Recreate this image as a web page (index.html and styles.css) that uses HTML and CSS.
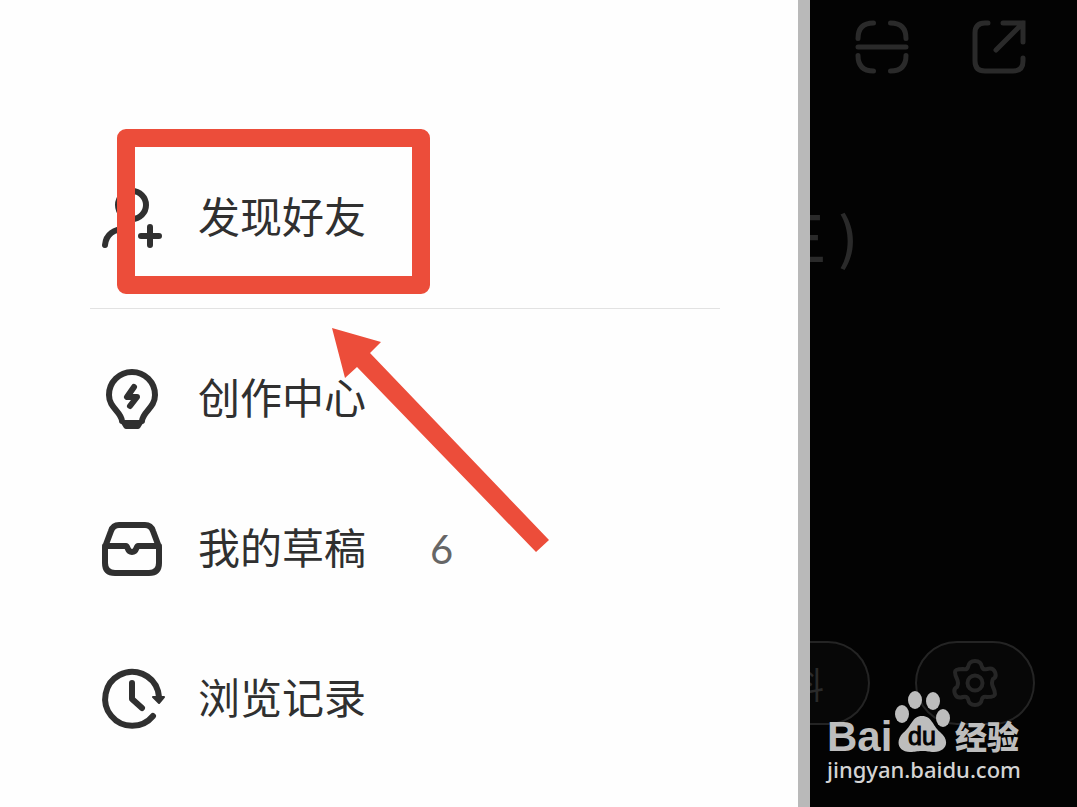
FILE: index.html
```html
<!DOCTYPE html>
<html lang="zh-CN">
<head>
    <meta charset="UTF-8">
    <meta name="viewport" content="width=device-width, initial-scale=1.0">
    <title>发现好友</title>
    <link rel="stylesheet" href="styles.css">
</head>
<body>
    <div class="screen">
        <nav class="drawer">
            <a href="#friends" class="menu-item">
                <svg class="menu-icon" viewBox="0 0 72 72">
                    <circle cx="36" cy="23" r="14"/>
                    <path d="M9 63C10 52 18 47 30 47M54 45v18M45 54h18"/>
                </svg>
                <span class="menu-label">发现好友</span>
            </a>
            <hr class="divider">
            <a href="#creator" class="menu-item">
                <svg class="menu-icon" viewBox="0 0 72 72">
                    <path d="M26 58C25 48 13 45 13 32A23 23 0 0 1 59 32C59 45 47 48 46 58"/>
                    <path class="fill" d="M23 57h26l-5 8q-1 1-2 1H30q-1 0-2-1z"/>
                    <path d="M38 24L31 34H41L34 43" stroke-width="6"/>
                </svg>
                <span class="menu-label">创作中心</span>
            </a>
            <a href="#drafts" class="menu-item">
                <svg class="menu-icon" viewBox="0 0 72 72">
                    <path d="M9 34L15 18Q17 12 23 12H49Q55 12 57 18L63 34V50Q63 60 53 60H19Q9 60 9 50ZM9 33H30C32 33 31 39 36 39S40 33 42 33H63"/>
                </svg>
                <span class="menu-label">我的草稿</span>
                <span class="menu-count">6</span>
            </a>
            <a href="#history" class="menu-item">
                <svg class="menu-icon" viewBox="0 0 72 72">
                    <path d="M57 53A27 27 0 1 1 62 28L63 34M36 20V36L46 45"/>
                    <path class="tip" d="M57 34h11L63 40z"/>
                </svg>
                <span class="menu-label">浏览记录</span>
            </a>
        </nav>

        <div class="backdrop">
            <div class="top-actions">
                <button class="icon-btn" aria-label="扫一扫">
                    <svg viewBox="0 0 54 54">
                        <path d="M3 18.500Q3 3 18.500 3M35.500 3Q51 3 51 18.500M3 35.500Q3 51 18.500 51M35.500 51Q51 51 51 35.500M3 27H51"/>
                    </svg>
                </button>
                <button class="icon-btn" aria-label="分享">
                    <svg viewBox="0 0 54 54">
                        <path d="M16 3H13Q3 3 3 13V41Q3 51 13 51H41Q51 51 51 41V38M31 3H51V22M51 3L24 30" stroke-linejoin="miter"/>
                    </svg>
                </button>
            </div>
            <div class="nickname"><span>王 )</span></div>
            <div class="profile-actions">
                <button class="pill pill-edit"><span>资料</span></button>
                <button class="pill" aria-label="设置">
                    <svg viewBox="0 0 48 48">
                        <path d="M17 8Q18 2 24 2T31 8Q32 11 36 10Q42 8 44 13T42 20Q40 24 42 28T44 35T36 38Q32 37 31 40Q30 46 24 46T17 40Q16 37 12 38Q6 40 4 35T6 28Q8 24 6 20T4 13T12 10Q16 11 17 8Z"/>
                        <circle cx="24" cy="24" r="7.500"/>
                    </svg>
                </button>
            </div>
        </div>

        <!-- highlight and pointer over the first menu entry -->
        <div class="highlight"></div>
        <svg class="arrow" viewBox="0 0 218 226">
            <path d="M0 0L49 14L38 25L217 212L204 224L25 39L13 50Z"/>
        </svg>

        <div class="watermark">
            <div class="brand">
                <span class="brand-bai">Bai</span>
                <svg class="paw" viewBox="0 0 56 62">
                    <ellipse cx="8" cy="23" rx="7" ry="9"/>
                    <ellipse cx="21" cy="9" rx="7" ry="9"/>
                    <ellipse cx="39" cy="10" rx="7" ry="9"/>
                    <ellipse cx="49" cy="27" rx="7" ry="9"/>
                    <path d="M28 25C38 25 38 34 46 41C57 50 52 61 40 61C34 61 34 60 28 60S22 61 16 61C4 61 1 50 9 42C18 35 18 25 28 25Z"/>
                    <text x="28" y="54" text-anchor="middle">du</text>
                </svg>
                <span class="brand-exp">经验</span>
            </div>
            <div class="site">jingyan.baidu.com</div>
        </div>
    </div>
</body>
</html>
```

FILE: styles.css
```css
* {
    margin: 0;
    padding: 0;
    box-sizing: border-box;
}

body {
    font-family: 'Noto Sans CJK SC', sans-serif;
    background: #fefefe;
}

.screen {
    position: relative;
    display: flex;
    min-height: 100vh;
    overflow: hidden;
}

/* Drawer */
.drawer {
    flex: 1;
    padding: 143px 78px 0 90px;
    background: #fefefe;
}

.menu-item {
    display: flex;
    align-items: center;
    height: 150px;
    padding-left: 6px;
    color: #303030;
    text-decoration: none;
}

.menu-icon {
    width: 72px;
    height: 72px;
    margin-right: 30px;
    fill: none;
    stroke: #303030;
    stroke-width: 6;
    stroke-linecap: round;
    stroke-linejoin: round;
}

.menu-icon .fill {
    fill: #303030;
    stroke: none;
}

.menu-icon .tip {
    fill: #303030;
    stroke-width: 2;
}

.menu-label {
    padding-bottom: 6px;
    font-size: 42px;
    line-height: 60px;
}

.menu-count {
    margin-left: 64px;
    font-family: Lato, sans-serif;
    font-size: 40px;
    color: #666;
}

.divider {
    height: 1px;
    margin: 15px 0;
    border: none;
    background: #e2e2e2;
}

/* Dimmed page behind the drawer */
.backdrop {
    display: flex;
    flex-direction: column;
    width: 279px;
    border-left: 12px solid #b9b9b9;
    background: #030303;
    overflow: hidden;
}

.top-actions {
    display: flex;
    gap: 63px;
    padding: 20px 0 0 45px;
}

.icon-btn {
    width: 54px;
    height: 54px;
    border: none;
    background: none;
}

.icon-btn svg {
    display: block;
    fill: none;
    stroke: #2a2a2a;
    stroke-width: 5;
    stroke-linecap: round;
}

.nickname {
    display: flex;
    justify-content: flex-end;
    width: 48px;
    margin-top: 119px;
    font-size: 56px;
    font-weight: 500;
    line-height: 84px;
    white-space: pre;
    color: #2a2a2a;
}

.profile-actions {
    display: flex;
    gap: 45px;
    margin-top: 364px;
}

.pill {
    display: flex;
    align-items: center;
    justify-content: center;
    width: 120px;
    height: 84px;
    border: 2px solid #242424;
    border-radius: 42px;
    background: #070707;
}

.pill-edit {
    justify-content: flex-end;
    width: 60px;
    padding-right: 44px;
    border-left: none;
    border-radius: 0 42px 42px 0;
    font-family: inherit;
    font-size: 36px;
    white-space: nowrap;
    color: #2a2a2a;
}

.pill svg {
    width: 48px;
    height: 48px;
    fill: none;
    stroke: #262626;
    stroke-width: 4;
}

/* Overlays */
.highlight {
    position: absolute;
    top: 129px;
    left: 117px;
    width: 313px;
    height: 165px;
    border: 18px solid #ec4d3a;
    border-radius: 9px;
}

.arrow {
    position: absolute;
    top: 328px;
    left: 332px;
    width: 218px;
    height: 226px;
    fill: #ec4d3a;
}

.watermark {
    position: absolute;
    right: 58px;
    bottom: 22px;
    width: 192px;
    color: #bdbdbd;
}

.brand {
    display: flex;
    align-items: flex-end;
    justify-content: space-between;
    height: 60px;
}

.brand-bai {
    font-family: 'Liberation Sans', sans-serif;
    font-size: 42px;
    font-weight: bold;
    line-height: 32px;
}

.paw {
    flex: none;
    width: 56px;
    height: 62px;
    margin: 0 2px 0 -2px;
    fill: #bdbdbd;
}

.paw text {
    font-family: 'Liberation Sans', sans-serif;
    font-size: 25px;
    fill: #030303;
    stroke: #030303;
}

.brand-exp {
    font-size: 32px;
    font-weight: 900;
    line-height: 36px;
    white-space: nowrap;
}

.site {
    font-family: 'Noto Sans', sans-serif;
    font-size: 22px;
    font-weight: 500;
    line-height: 32px;
    text-align: center;
    white-space: nowrap;
    color: #d4d4d4;
}
```
